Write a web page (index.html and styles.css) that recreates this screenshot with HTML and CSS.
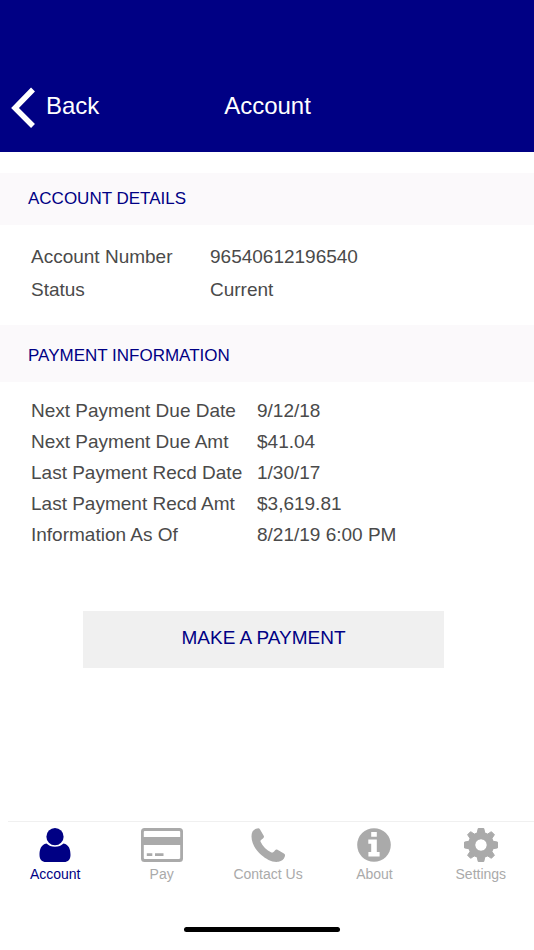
FILE: index.html
```html
<!DOCTYPE html>
<html lang="en">
<head>
    <meta charset="UTF-8">
    <meta name="viewport" content="width=device-width, initial-scale=1.0">
    <title>Account</title>
    <link rel="stylesheet" href="styles.css">
</head>
<body>
    <header class="top-bar">
        <a href="#" class="back-link">
            <svg class="back-icon" viewBox="0 0 24 42" aria-hidden="true">
                <path d="M22 2.500 4 21l18 18" fill="none" stroke="#fff" stroke-width="5.500"/>
            </svg>
            Back
        </a>
        <h1 class="page-title">Account</h1>
    </header>

    <main class="content">
        <section>
            <h2 class="section-title">ACCOUNT DETAILS</h2>
            <dl class="details account-details">
                <dt>Account Number</dt><dd>96540612196540</dd>
                <dt>Status</dt><dd>Current</dd>
            </dl>
        </section>

        <section>
            <h2 class="section-title payment-title">PAYMENT INFORMATION</h2>
            <dl class="details payment-details">
                <dt>Next Payment Due Date</dt><dd>9/12/18</dd>
                <dt>Next Payment Due Amt</dt><dd>$41.04</dd>
                <dt>Last Payment Recd Date</dt><dd>1/30/17</dd>
                <dt>Last Payment Recd Amt</dt><dd>$3,619.81</dd>
                <dt>Information As Of</dt><dd>8/21/19 6:00 PM</dd>
            </dl>
        </section>

        <div class="actions">
            <button type="button" class="pay-btn">MAKE A PAYMENT</button>
        </div>
    </main>

    <hr class="divider">
    <nav class="tab-bar">
        <a href="#" class="tab active">
            <svg class="tab-icon" viewBox="0 0 44 34" aria-hidden="true">
                <path d="M13.500 15.500C8 16.500 6.500 21.500 6.500 27c0 4.500 2.500 7 6.500 7h18c4 0 6.500-2.500 6.500-7 0-5.500-1.500-10.500-7-11.500-2 2-5 3.300-8.500 3.300s-6.500-1.300-8.500-3.300z"/>
                <circle cx="22" cy="8.700" r="8.600"/>
            </svg>
            Account
        </a>
        <a href="#" class="tab">
            <svg class="tab-icon" viewBox="0 0 44 34" aria-hidden="true">
                <path fill-rule="evenodd" d="M4.500 0h35A3.500 3.500 0 0 1 43 3.500v27a3.500 3.500 0 0 1-3.500 3.500h-35A3.500 3.500 0 0 1 1 30.500v-27A3.500 3.500 0 0 1 4.500 0zM4.700 3a.9.9 0 0 0-.9.900V9h36.400V3.900a.9.900 0 0 0-.9-.900zM3.800 17v13.100c0 .500.400.900.900.900h34.600c.500 0 .900-.400.900-.900V17z"/>
                <path d="M6.800 25.200h5.500V28H6.800zM15 25.200h8.500V28H15z"/>
            </svg>
            Pay
        </a>
        <a href="#" class="tab">
            <svg class="tab-icon" viewBox="0 0 44 34" aria-hidden="true">
                <path d="M5.500 8.500c0-4 1.300-6.500 4.500-7.700C12 0 13.200 0 13.900 1.200l3.800 6.600c.6 1.200.3 1.800-.7 2.600-2 1.500-3 2-2.400 3.400 2 4.600 6 8.400 10.800 10.600 1.300.6 2-.2 3.500-2 .9-1 1.600-1.200 2.600-.6l6.400 3.700c1.300.8 1.300 1.500.9 3.100-.8 3-3 4.700-6.300 5.200-6 .9-12.300-2.600-17.200-6.800C9.800 22.300 5.500 15.500 5.500 8.500z"/>
            </svg>
            Contact Us
        </a>
        <a href="#" class="tab">
            <svg class="tab-icon" viewBox="0 0 44 34" aria-hidden="true">
                <circle cx="22" cy="17" r="16.800"/>
                <path fill="#fff" d="M19.200 4h5.600v4.800h-5.600zM16.300 11.500h8.500v12.600h2.800v4.300H16.400v-4.300h2.800v-8.300h-2.900z"/>
            </svg>
            About
        </a>
        <a href="#" class="tab">
            <svg class="tab-icon" viewBox="0 0 44 34" aria-hidden="true">
                <path fill-rule="evenodd" stroke="currentColor" stroke-width="1" stroke-linejoin="round" d="M19.200.5h5.600l1 4.600 2.600 1.100 4-2.500 3 3-2.700 4.100 1 2.400 4.800.9v5.800l-4.800.9-1 2.400 2.700 4.100-3 3-4-2.500-2.600 1.100-1 4.600h-5.600l-1-4.600-2.600-1.100-4 2.500-3-3 2.700-4.100-1-2.400-4.800-.9v-5.800l4.800-.9 1-2.400-2.700-4.100 3-3 4 2.500 2.600-1.100zM22 10.700a6.300 6.300 0 1 0 0 12.600 6.300 6.300 0 0 0 0-12.600z"/>
                <circle cx="22" cy="17" r="9.500" fill="none" stroke="currentColor" stroke-width="7"/>
            </svg>
            Settings
        </a>
    </nav>
    <div class="home-indicator"></div>
</body>
</html>
```

FILE: styles.css
```css
* {
    box-sizing: border-box;
}
body {
    margin: 0;
    min-height: 100vh;
    display: flex;
    flex-direction: column;
    font-family: "Liberation Sans", Arial, sans-serif;
    background-color: #fff;
    color: #4a4a4a;
}
a {
    text-decoration: none;
}
.top-bar {
    display: grid;
    grid-template-columns: 1fr auto 1fr;
    align-items: center;
    padding: 84px 10px 20px 11px;
    background-color: #000084;
    color: #fff;
}
.back-link {
    display: flex;
    align-items: center;
    gap: 11px;
    height: 48px;
    padding-bottom: 4px;
    font-size: 24px;
    color: #fff;
}
.back-icon {
    width: 24px;
    height: 42px;
    margin-top: 4px;
}
.page-title {
    margin: 0;
    padding-bottom: 4px;
    font-size: 24px;
    font-weight: normal;
}
.content {
    flex: 1;
    padding-top: 21px;
}
.section-title {
    margin: 0;
    padding: 0 28px;
    line-height: 52px;
    font-size: 17px;
    font-weight: normal;
    color: #000084;
    background-color: #fbf9fb;
}
.payment-title {
    padding-top: 4px;
    line-height: 53px;
}
.details {
    display: grid;
    margin: 0;
    font-size: 19px;
}
.details dd {
    margin: 0;
}
.account-details {
    grid-template-columns: 179px 1fr;
    padding: 15px 31px 19px;
    line-height: 33px;
}
.payment-details {
    grid-template-columns: 226px 1fr;
    padding: 13px 31px;
    line-height: 31px;
}
.actions {
    display: flex;
    padding: 48px 90px 0 83px;
}
.pay-btn {
    flex: 1;
    height: 57px;
    padding: 0 0 4px;
    border: none;
    font-family: inherit;
    font-size: 19px;
    color: #000084;
    background-color: #f0f0f0;
    cursor: pointer;
}
.divider {
    align-self: stretch;
    margin: 0 0 0 8px;
    border: none;
    border-top: 1px solid #f0f0f0;
}
.tab-bar {
    display: flex;
    padding: 6px 0 0 2px;
}
.tab {
    flex: 1;
    display: flex;
    flex-direction: column;
    align-items: center;
    gap: 4px;
    font-size: 14px;
    line-height: 16px;
    color: #aaa;
}
.tab.active {
    color: #000084;
}
.tab-icon {
    width: 44px;
    height: 34px;
    fill: currentColor;
}
.home-indicator {
    align-self: center;
    width: 156px;
    height: 5px;
    margin: 45px 10px 18px 0;
    border-radius: 3px;
    background-color: #000;
}
```
